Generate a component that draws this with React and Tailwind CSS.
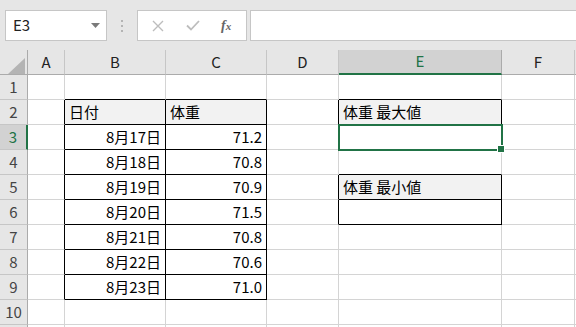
import React from 'react'

const cols = ['A', 'B', 'C', 'D', 'E', 'F', '']
const rows = [1, 2, 3, 4, 5, 6, 7, 8, 9, 10, 11]

const cells = {
  B2: '日付', C2: '体重', E2: '体重 最大値', E5: '体重 最小値',
  B3: '8月17日', C3: '71.2',
  B4: '8月18日', C4: '70.8',
  B5: '8月19日', C5: '70.9',
  B6: '8月20日', C6: '71.5',
  B7: '8月21日', C7: '70.8',
  B8: '8月22日', C8: '70.6',
  B9: '8月23日', C9: '71.0',
}

const headFill = ['B2', 'C2', 'E2', 'E5']

function inBox(r, c) {
  const col = cols[c]
  if ((col === 'B' || col === 'C') && r >= 2 && r <= 9) return true
  if (col === 'E' && [2, 3, 5, 6].includes(r)) return true
  return false
}

function Cell({ r, c }) {
  const key = cols[c] + r
  const text = cells[key]
  const right = inBox(r, c) || inBox(r, c + 1) ? 'border-r-black' : 'border-r-[#d4d4d4]'
  const bottom = inBox(r, c) || inBox(r + 1, c) ? 'border-b-black' : 'border-b-[#d4d4d4]'
  const fill = headFill.includes(key) ? 'bg-[#f2f2f2]' : 'bg-white'
  const numeric = text && r >= 3 && (cols[c] === 'B' || cols[c] === 'C')
  const selected = key === 'E3'
  return (
    <div className={`relative flex items-center border-r border-b text-[15px] text-black ${right} ${bottom} ${fill} ${numeric ? 'justify-end pr-[4px]' : 'pl-[4px]'} ${selected ? 'z-10' : ''}`}>
      <span className="whitespace-nowrap pt-[1px]">{text}</span>
      {selected && (
        <>
          <div className="absolute -left-[1px] -top-[1px] -right-[2px] -bottom-[2px] border-2 border-[#217346]" />
          <div className="absolute -right-[3px] -bottom-[3px] w-[6px] h-[6px] bg-[#217346] outline outline-1 outline-white" />
        </>
      )}
    </div>
  )
}

export default function App() {
  return (
    <div className="w-[576px] h-[327px] overflow-hidden bg-[#e6e6e6]" style={{ fontFamily: '"Noto Sans CJK JP", "Noto Sans", sans-serif' }}>
      {/* formula bar */}
      <div className="h-[50px] flex items-start pt-[10px] pl-[5px]">
        <div className="w-[102px] h-[31px] bg-white border border-[#c6c6c6] flex items-center justify-between pl-[7px] pr-[6px]">
          <span className="text-[15px] text-[#222]">E3</span>
          <svg width="9" height="5" viewBox="0 0 9 5"><path d="M0 0h9L4.5 5z" fill="#7a7a7a" /></svg>
        </div>
        <div className="w-[30px] h-[31px] flex flex-col items-center justify-center gap-[3px]">
          <div className="w-[2px] h-[2px] bg-[#b4b4b4]" />
          <div className="w-[2px] h-[2px] bg-[#b4b4b4]" />
          <div className="w-[2px] h-[2px] bg-[#b4b4b4]" />
        </div>
        <div className="w-[110px] h-[31px] bg-white border border-[#c6c6c6] flex items-center">
          <svg className="ml-[14px]" width="12" height="12" viewBox="0 0 12 12"><path d="M1 1l10 10M11 1L1 11" stroke="#bdbdbd" strokeWidth="1.4" /></svg>
          <svg className="ml-[22px]" width="14" height="11" viewBox="0 0 14 11"><path d="M1 5.5l4 4L13 1" stroke="#bdbdbd" strokeWidth="1.8" fill="none" /></svg>
          <span className="ml-[21px] text-[14px] italic text-[#666] font-bold" style={{ fontFamily: '"Liberation Serif", serif' }}>f<span className="text-[11px]">x</span></span>
        </div>
        <div className="ml-[3px] flex-1 h-[31px] bg-white border border-[#c6c6c6] border-r-0" />
      </div>

      {/* sheet */}
      <div className="grid grid-cols-[28px_37px_101px_101px_72px_163px_73px_1fr] auto-rows-[25px] bg-white">
        <div className="relative bg-[#e6e6e6] border-r border-b border-[#ababab]">
          <svg className="absolute left-[8px] top-[8px]" width="17" height="16" viewBox="0 0 17 16"><path d="M17 0V16H0z" fill="#b4b4b4" /></svg>
        </div>
        {cols.map((c) => (
          <div
            key={c || 'x'}
            className={`flex items-center justify-center text-[15px] border-r ${c === 'E' ? 'bg-[#d2d2d2] text-[#217346] border-b-2 border-b-[#217346] border-r-[#ababab]' : 'bg-[#e6e6e6] text-[#222] border-b border-b-[#ababab] border-r-[#c6c6c6]'}`}
          >
            {c}
          </div>
        ))}
        {rows.map((r) => (
          <React.Fragment key={r}>
            <div
              className={`flex items-center justify-center text-[15px] border-b border-b-[#c6c6c6] ${r === 3 ? 'bg-[#d2d2d2] text-[#217346] border-r-2 border-r-[#217346]' : 'bg-[#e6e6e6] text-[#444] border-r border-r-[#ababab]'}`}
            >
              {r < 11 ? r : ''}
            </div>
            {cols.map((c, ci) => (
              <Cell key={c + r} r={r} c={ci} />
            ))}
          </React.Fragment>
        ))}
      </div>
    </div>
  )
}
